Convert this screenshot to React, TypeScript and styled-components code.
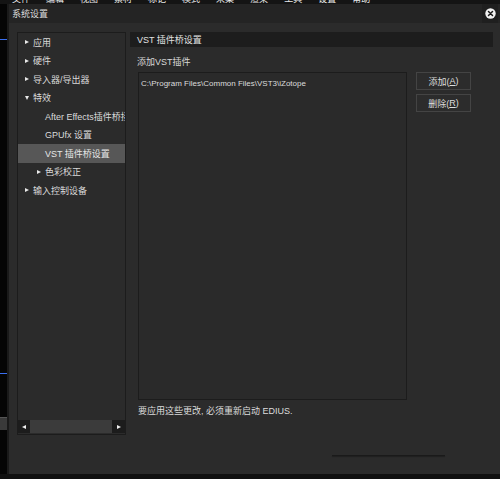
import React from "react";
import styled, { createGlobalStyle } from "styled-components";

const GlobalStyle = createGlobalStyle`
	html, body {
		margin: 0;
		padding: 0;
		background: #0b0b0b;
	}
	* {
		box-sizing: border-box;
	}
`;

const FONT = `"Liberation Sans", "Noto Sans CJK SC", sans-serif`;

const menuItems = ["文件", "编辑", "视图", "素材", "标记", "模式", "采集", "渲染", "工具", "设置", "帮助"];

interface TreeNode {
	label: string;
	level: number;
	arrow?: "right" | "down";
	selected?: boolean;
}

const treeNodes: TreeNode[] = [
	{ label: "应用", level: 0, arrow: "right" },
	{ label: "硬件", level: 0, arrow: "right" },
	{ label: "导入器/导出器", level: 0, arrow: "right" },
	{ label: "特效", level: 0, arrow: "down" },
	{ label: "After Effects插件桥接", level: 1 },
	{ label: "GPUfx 设置", level: 1 },
	{ label: "VST 插件桥设置", level: 1, selected: true },
	{ label: "色彩校正", level: 1, arrow: "right" },
	{ label: "输入控制设备", level: 0, arrow: "right" },
];

/* exported component */
const App = () => {
	return (
		<>
			<GlobalStyle />
			<Page>
				<MenuBar>
					{menuItems.map((m) => (
						<MenuItem key={m}>{m}</MenuItem>
					))}
				</MenuBar>
				<MainRow>
					<LeftStrip>
						<BlueLine $top={35} />
						<BlueLine $top={333} />
						<GrayBlock />
					</LeftStrip>
					<Window>
						<TitleBar>
							<Title>系统设置</Title>
							<CloseButton>
								<svg width="11" height="11" viewBox="0 0 11 11">
									<circle cx="5.5" cy="5.5" r="5.2" fill="#f2f2f2" />
									<path d="M3.5 3.5 L7.5 7.5 M7.5 3.5 L3.5 7.5" stroke="#1a1a1a" strokeWidth="1.5" strokeLinecap="round" />
								</svg>
							</CloseButton>
						</TitleBar>
						<Body>
							<ContentRow>
								<TreePanel>
									<TreeList>
										{treeNodes.map((n) => (
											<TreeItem key={n.label} $level={n.level} $selected={!!n.selected}>
												<ArrowSlot>{n.arrow && <Arrow $dir={n.arrow} />}</ArrowSlot>
												<ItemLabel>{n.label}</ItemLabel>
											</TreeItem>
										))}
									</TreeList>
									<HScroll>
										<ScrollButton>
											<ScrollArrow $dir="left" />
										</ScrollButton>
										<ScrollThumb />
										<ScrollButton>
											<ScrollArrow $dir="right" />
										</ScrollButton>
									</HScroll>
								</TreePanel>
								<RightPanel>
									<SectionHeader>VST 插件桥设置</SectionHeader>
									<FieldLabel>添加VST插件</FieldLabel>
									<ListRow>
										<PathList>
											<PathEntry>C:\Program Files\Common Files\VST3\iZotope</PathEntry>
										</PathList>
										<ButtonColumn>
											<ActionButton>
												添加(<u>A</u>)
											</ActionButton>
											<ActionButton>
												删除(<u>R</u>)
											</ActionButton>
										</ButtonColumn>
									</ListRow>
									<Notice>要应用这些更改, 必须重新启动 EDIUS.</Notice>
								</RightPanel>
							</ContentRow>
							<BottomLine />
						</Body>
					</Window>
				</MainRow>
				<BottomStrip />
			</Page>
		</>
	);
};

export default App;

// Styled Components
const Page = styled.div`
	width: 500px;
	height: 479px;
	display: flex;
	flex-direction: column;
	background: #0b0b0b;
	overflow: hidden;
	font-family: ${FONT};
`;

const MenuBar = styled.div`
	height: 4px;
	display: flex;
	gap: 16px;
	padding-left: 12px;
	overflow: hidden;
	background: #141414;
`;

const MenuItem = styled.span`
	font-size: 9px;
	line-height: 9px;
	margin-top: -5px;
	color: #e8e8e8;
	white-space: nowrap;
`;

const MainRow = styled.div`
	flex: 1;
	display: flex;
	min-height: 0;
`;

const LeftStrip = styled.div`
	width: 7px;
	display: flex;
	flex-direction: column;
	background: #050505;
`;

const BlueLine = styled.div<{ $top: number }>`
	height: 1px;
	flex-shrink: 0;
	margin-top: ${(p) => p.$top}px;
	background: #3a6ff0;
`;

const GrayBlock = styled.div`
	height: 13px;
	flex-shrink: 0;
	margin-top: 43px;
	background: #3a3a3a;
	border-top: 1px solid #555;
`;

const Window = styled.div`
	flex: 1;
	display: flex;
	flex-direction: column;
	border-left: 2px solid #1a1a1a;
	background: #2b2b2b;
`;

const TitleBar = styled.div`
	height: 19px;
	display: flex;
	align-items: center;
	justify-content: space-between;
	padding: 0 2px 0 3px;
	background: #242424;
`;

const Title = styled.span`
	font-size: 9px;
	color: #dcdcdc;
`;

const CloseButton = styled.div`
	width: 16px;
	height: 19px;
	display: flex;
	align-items: center;
	justify-content: center;
	background: #1f1f1f;
`;

const Body = styled.div`
	flex: 1;
	display: flex;
	flex-direction: column;
	padding: 9px 7px 0 8px;
	background: #2b2b2b;
`;

const ContentRow = styled.div`
	height: 403px;
	display: flex;
	gap: 4px;
`;

const TreePanel = styled.div`
	width: 109px;
	display: flex;
	flex-direction: column;
	border: 1px solid #1c1c1c;
	background: #2b2b2b;
`;

const TreeList = styled.div`
	flex: 1;
	display: flex;
	flex-direction: column;
	overflow: hidden;
`;

const TreeItem = styled.div<{ $level: number; $selected: boolean }>`
	height: 18.5px;
	flex-shrink: 0;
	display: flex;
	align-items: center;
	padding-left: ${(p) => 7 + p.$level * 12}px;
	background: ${(p) => (p.$selected ? "#575757" : "transparent")};
	color: ${(p) => (p.$selected ? "#e6e6e6" : "#dadada")};
	font-size: 9px;
	white-space: nowrap;
	overflow: hidden;
`;

const ArrowSlot = styled.span`
	width: 8px;
	flex-shrink: 0;
	display: flex;
	align-items: center;
`;

const Arrow = styled.span<{ $dir: "right" | "down" }>`
	width: 0;
	height: 0;
	${(p) =>
		p.$dir === "right"
			? `border-top: 2.5px solid transparent;
			   border-bottom: 2.5px solid transparent;
			   border-left: 4px solid #e8e8e8;`
			: `border-left: 2.5px solid transparent;
			   border-right: 2.5px solid transparent;
			   border-top: 4px solid #e8e8e8;`}
`;

const ItemLabel = styled.span`
	white-space: nowrap;
`;

const HScroll = styled.div`
	height: 13px;
	margin-bottom: 1px;
	display: grid;
	grid-template-columns: 12px 1fr 13px;
`;

const ScrollButton = styled.div`
	display: flex;
	align-items: center;
	justify-content: center;
	background: #1c1c1c;
`;

const ScrollArrow = styled.span<{ $dir: "left" | "right" }>`
	width: 0;
	height: 0;
	border-top: 2.5px solid transparent;
	border-bottom: 2.5px solid transparent;
	${(p) => (p.$dir === "left" ? "border-right: 4px solid #eee;" : "border-left: 4px solid #eee;")}
`;

const ScrollThumb = styled.div`
	background: #3b3b3b;
`;

const RightPanel = styled.div`
	flex: 1;
	display: flex;
	flex-direction: column;
`;

const SectionHeader = styled.div`
	height: 15px;
	display: flex;
	align-items: center;
	padding-left: 7px;
	background: #1d1d1d;
	color: #e2e2e2;
	font-size: 9px;
`;

const FieldLabel = styled.div`
	margin-top: 10px;
	padding-left: 7px;
	height: 10px;
	line-height: 10px;
	font-size: 9px;
	color: #d8d8d8;
`;

const ListRow = styled.div`
	margin-top: 5px;
	display: flex;
	padding-left: 8px;
	gap: 9px;
`;

const PathList = styled.div`
	width: 269px;
	height: 328px;
	border: 1px solid #1c1c1c;
	background: #2a2a2a;
	padding: 6px 2px;
`;

const PathEntry = styled.div`
	font-size: 8px;
	line-height: 10px;
	color: #dcdcdc;
	white-space: nowrap;
`;

const ButtonColumn = styled.div`
	display: flex;
	flex-direction: column;
	gap: 4px;
`;

const ActionButton = styled.div`
	width: 55px;
	height: 18px;
	display: flex;
	align-items: center;
	justify-content: center;
	border: 1px solid #444;
	background: #2c2c2c;
	color: #dedede;
	font-size: 9px;

	u {
		text-underline-offset: 1px;
	}
`;

const Notice = styled.div`
	margin-top: 6px;
	padding-left: 8px;
	font-size: 9px;
	line-height: 10px;
	color: #dcdcdc;
`;

const BottomLine = styled.div`
	margin-top: 20px;
	margin-left: 315px;
	width: 113px;
	height: 1px;
	background: #1a1a1a;
	box-shadow: 0 1px 1px rgba(0, 0, 0, 0.3);
`;

const BottomStrip = styled.div`
	height: 5px;
	background: #101010;
`;
